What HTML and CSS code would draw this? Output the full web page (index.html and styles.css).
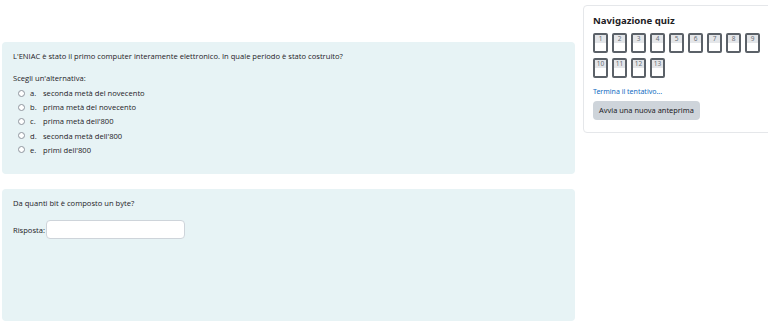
FILE: index.html
```html
<!DOCTYPE html>
<html lang="it">

<head>
    <meta charset="UTF-8">
    <meta name="viewport" content="width=device-width, initial-scale=1.0">
    <title>Anteprima quiz</title>
    <link rel="stylesheet" href="styles.css">
</head>

<body>
    <div class="page">
        <div class="questions">
            <div class="que">
                <p class="qtext">L'ENIAC è stato il primo computer interamente elettronico. In quale periodo è stato costruito?</p>
                <p class="prompt">Scegli un'alternativa:</p>
                <div class="answer">
                    <label class="option"><span class="radio"></span><span class="letter">a.</span><span>seconda metà del novecento</span></label>
                    <label class="option"><span class="radio"></span><span class="letter">b.</span><span>prima metà del novecento</span></label>
                    <label class="option"><span class="radio"></span><span class="letter">c.</span><span>prima metà dell'800</span></label>
                    <label class="option"><span class="radio"></span><span class="letter">d.</span><span>seconda metà dell'800</span></label>
                    <label class="option"><span class="radio"></span><span class="letter">e.</span><span>primi dell'800</span></label>
                </div>
            </div>
            <div class="que">
                <p class="qtext">Da quanti bit è composto un byte?</p>
                <div class="ablock">
                    <label for="risposta">Risposta:</label>
                    <input type="text" id="risposta">
                </div>
            </div>
        </div>

        <div class="nav-block">
            <h3>Navigazione quiz</h3>
            <div class="qn-buttons">
                <span class="qn"><span>1</span></span>
                <span class="qn"><span>2</span></span>
                <span class="qn"><span>3</span></span>
                <span class="qn"><span>4</span></span>
                <span class="qn"><span>5</span></span>
                <span class="qn"><span>6</span></span>
                <span class="qn"><span>7</span></span>
                <span class="qn"><span>8</span></span>
                <span class="qn"><span>9</span></span>
                <span class="qn"><span>10</span></span>
                <span class="qn"><span>11</span></span>
                <span class="qn"><span>12</span></span>
                <span class="qn"><span>13</span></span>
            </div>
            <a class="finish" href="#">Termina il tentativo...</a>
            <button class="restart">Avvia una nuova anteprima</button>
        </div>
    </div>
</body>

</html>
```

FILE: styles.css
```css
* {
    box-sizing: border-box;
}

body {
    margin: 0;
    background-color: #ffffff;
    font-family: "Open Sans", "Noto Sans", sans-serif;
    color: #1d2125;
    overflow: hidden;
}

.page {
    display: flex;
    align-items: flex-start;
    gap: 8px;
    padding-left: 2px;
    width: 800px;
}

.questions {
    flex-shrink: 0;
    width: 573px;
    padding-top: 42px;
    display: flex;
    flex-direction: column;
    gap: 15px;
}

.que {
    height: 132px;
    background-color: #e7f3f5;
    border-radius: 4px;
    padding: 9px 11px;
    font-size: 7.6px;
}

.qtext {
    margin: 0;
    line-height: 10px;
}

.prompt {
    margin: 12px 0 3px;
    line-height: 10px;
}

.answer {
    display: flex;
    flex-direction: column;
}

.option {
    display: flex;
    align-items: center;
    height: 14.2px;
    padding-left: 5px;
}

.radio {
    width: 7px;
    height: 7px;
    border: 1px solid #8f959e;
    border-radius: 50%;
    background-color: #ffffff;
    margin-right: 5px;
}

.letter {
    width: 13px;
}

.ablock {
    display: flex;
    align-items: center;
    margin-top: 12px;
    gap: 1px;
}

.ablock input {
    width: 139px;
    height: 19px;
    border: 1px solid #ced4da;
    border-radius: 4px;
    background-color: #ffffff;
}

.nav-block {
    flex-shrink: 0;
    margin-top: 5px;
    width: 200px;
    height: 128px;
    border: 1px solid #e5e7ea;
    border-radius: 4px;
    padding: 8px 9px;
    font-family: "Noto Sans", "Open Sans", sans-serif;
}

.nav-block h3 {
    margin: 0 0 6px;
    font-size: 9.6px;
    font-weight: 700;
    line-height: 13px;
    color: #1d2125;
}

.qn-buttons {
    display: flex;
    flex-wrap: wrap;
    gap: 5px 4px;
    width: 175px;
}

.qn {
    width: 15px;
    height: 20px;
    border: 2px solid #5b6168;
    border-radius: 2px;
    background-color: #ffffff;
}

.qn span {
    display: block;
    height: 8px;
    background-color: #e4e6e9;
    font-size: 6.5px;
    line-height: 8px;
    color: #6a7078;
    text-align: center;
}

.finish {
    display: block;
    margin-top: 9px;
    font-size: 7px;
    color: #0f6cbf;
    text-decoration: none;
}

.restart {
    margin-top: 4px;
    height: 19px;
    padding: 0 6px;
    border: none;
    border-radius: 4px;
    background-color: #ced4da;
    color: #1d2125;
    font-family: "Noto Sans", "Open Sans", sans-serif;
    font-size: 7.4px;
}
```
